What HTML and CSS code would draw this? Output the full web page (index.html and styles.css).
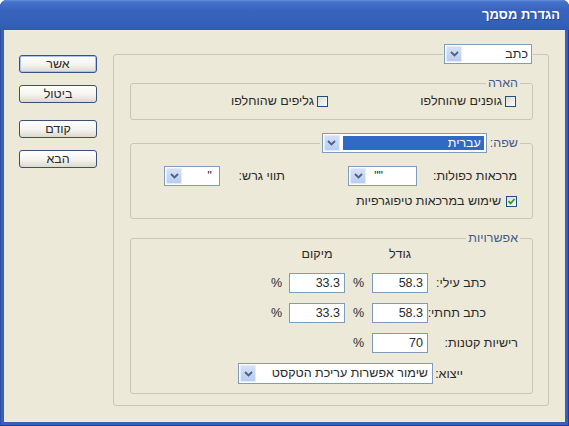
FILE: index.html
```html
<!DOCTYPE html>
<html lang="he" dir="rtl">
<head>
<meta charset="utf-8">
<title>הגדרת מסמך</title>
<link rel="stylesheet" href="styles.css">
</head>
<body>
<div class="window">
  <div class="titlebar"><span class="title">הגדרת מסמך</span></div>
  <div class="client">
    <fieldset class="main">
      <legend class="main-legend">
        <div class="combo combo-kind"><span class="val">כתב</span><span class="arrow"><svg width="9" height="6" viewBox="0 0 9 6"><path d="M1 1 L4.5 4.5 L8 1" fill="none" stroke="#4d6185" stroke-width="1.8"/></svg></span></div>
      </legend>

      <fieldset class="group g-highlight">
        <legend>הארה</legend>
        <div class="check-row">
          <div class="check item1"><span class="box"></span><span>גופנים שהוחלפו</span></div>
          <div class="check item2"><span class="box"></span><span>גליפים שהוחלפו</span></div>
        </div>
      </fieldset>

      <fieldset class="group g-lang">
        <legend class="lang-legend">
          <span class="legend-label">שפה:</span>
          <div class="combo combo-lang selected"><span class="val">עברית</span><span class="arrow"><svg width="9" height="6" viewBox="0 0 9 6"><path d="M1 1 L4.5 4.5 L8 1" fill="none" stroke="#4d6185" stroke-width="1.8"/></svg></span></div>
        </legend>
        <div class="quote-row">
          <span class="lbl-quotes">מרכאות כפולות:</span>
          <div class="combo combo-dq"><span class="val">""</span><span class="arrow"><svg width="9" height="6" viewBox="0 0 9 6"><path d="M1 1 L4.5 4.5 L8 1" fill="none" stroke="#4d6185" stroke-width="1.8"/></svg></span></div>
          <span class="lbl-apos">תווי גרש:</span>
          <div class="combo combo-sq"><span class="val">''</span><span class="arrow"><svg width="9" height="6" viewBox="0 0 9 6"><path d="M1 1 L4.5 4.5 L8 1" fill="none" stroke="#4d6185" stroke-width="1.8"/></svg></span></div>
        </div>
        <div class="check typo"><span class="box"><svg width="9" height="9" viewBox="0 0 9 9"><path d="M1.5 4.2 L3.6 6.4 L7.6 2" fill="none" stroke="#21a121" stroke-width="1.7"/></svg></span><span>שימוש במרכאות טיפוגרפיות</span></div>
      </fieldset>

      <fieldset class="group g-opts">
        <legend>אפשרויות</legend>
        <div class="opt-grid">
          <span></span><span class="head">גודל</span><span></span><span class="head">מיקום</span><span></span>
          <span class="lbl lbl-sup">כתב עילי:</span><span class="field">58.3</span><span class="pct">%</span><span class="field">33.3</span><span class="pct">%</span>
          <span class="lbl lbl-sub">כתב תחתי:</span><span class="field">58.3</span><span class="pct">%</span><span class="field">33.3</span><span class="pct">%</span>
          <span class="lbl lbl-caps">רישיות קטנות:</span><span class="field">70</span><span class="pct">%</span><span></span><span></span>
        </div>
        <div class="export-row">
          <span class="lbl-export">ייצוא:</span>
          <div class="combo combo-export"><span class="val">שימור אפשרות עריכת הטקסט</span><span class="arrow"><svg width="9" height="6" viewBox="0 0 9 6"><path d="M1 1 L4.5 4.5 L8 1" fill="none" stroke="#4d6185" stroke-width="1.8"/></svg></span></div>
        </div>
      </fieldset>
    </fieldset>

    <div class="buttons">
      <div class="btn default">אשר</div>
      <div class="btn b-cancel">ביטול</div>
      <div class="btn b-prev">קודם</div>
      <div class="btn b-next">הבא</div>
    </div>
  </div>
</div>
</body>
</html>
```
FILE: styles.css
```css
html, body {
  margin: 0;
  padding: 0;
  background: #ffffff;
}
body {
  font-family: "Liberation Sans", "DejaVu Sans", sans-serif;
  font-size: 12.5px;
  line-height: 14px;
  color: #2a2a2a;
}
.window {
  width: 569px;
  height: 426px;
  display: flex;
  flex-direction: column;
  background: #3561bb;
  border-radius: 7px 7px 0 0;
  overflow: hidden;
  box-shadow: inset 0 -1px 0 #1d3f96, inset 1px 0 0 #2a50a8, inset -1px 0 0 #1d3f96;
}
.titlebar {
  flex: none;
  height: 30px;
  display: flex;
  align-items: center;
  padding-right: 9px;
  background: linear-gradient(#6690de 0, #4472c9 2px, #3864bd 10px, #3561bb 22px, #305ab3 30px);
  color: #ffffff;
  font-weight: bold;
  font-size: 13px;
}
.title {
  text-shadow: 1px 1px 0 rgba(10, 30, 90, 0.45);
}
.client {
  flex: 1;
  margin: 0 4px 4px;
  background: #ece9d8;
  display: flex;
  gap: 16px;
  padding: 14px 16px 16px 15px;
  box-sizing: border-box;
}
.main {
  flex: none;
  width: 436px;
  box-sizing: border-box;
  margin: 0;
  padding: 12px 15px 0 16px;
  border: 1px solid #c9c6b4;
  border-radius: 3px;
  min-inline-size: 0;
}
.main-legend {
  padding: 0 1px;
}
.group {
  margin: 0;
  border: 1px solid #c9c6b4;
  border-radius: 3px;
  min-inline-size: 0;
  padding: 0 12px 0 10px;
}
.group > legend {
  padding: 0 2px;
  color: #46588c;
}
.g-highlight {
  padding-top: 4px;
  padding-bottom: 11px;
}
.g-lang {
  margin-top: 13px;
  padding-top: 13px;
  padding-bottom: 10px;
}
.g-opts {
  margin-top: 12px;
  padding-top: 2px;
  padding-bottom: 9px;
}

/* combo boxes */
.combo {
  display: flex;
  height: 20px;
  box-sizing: border-box;
  border: 1px solid #7f9db9;
  background: #ffffff;
  padding: 1px;
  color: #2a2a2a;
}
.combo .val {
  flex: 1;
  text-align: right;
  padding-right: 2px;
  line-height: 16px;
  white-space: nowrap;
  overflow: hidden;
}
.combo .arrow {
  flex: none;
  width: 16px;
  border-radius: 2px;
  background: linear-gradient(#d6e2f9, #b7caf0);
  box-shadow: inset 0 0 0 1px #e4ecfb;
  display: flex;
  align-items: center;
  justify-content: center;
}
.combo-kind {
  width: 88px;
}
.combo-lang {
  width: 165px;
}
.combo.selected .val {
  background: #316ac5;
  color: #ffffff;
  margin: 1px 1px 1px 3px;
  line-height: 14px;
  padding-right: 3px;
}
.lang-legend {
  display: flex;
  align-items: center;
  gap: 3px;
}
.legend-label {
  color: #46588c;
}

/* check boxes */
.check-row {
  display: flex;
  height: 14px;
  align-items: center;
}
.check {
  display: flex;
  align-items: center;
  gap: 3px;
  white-space: nowrap;
}
.item1 {
  width: 188px;
  margin-right: 4px;
}
.box {
  flex: none;
  width: 11px;
  height: 11px;
  box-sizing: border-box;
  border: 1px solid #1c5180;
  background: linear-gradient(135deg, #dcdcd5, #fbfbf8);
  display: flex;
  align-items: center;
  justify-content: center;
}
.typo {
  margin-top: 8px;
  margin-right: 3px;
  gap: 5px;
  height: 14px;
}

/* quotes row */
.quote-row {
  display: flex;
  align-items: center;
  height: 20px;
}
.lbl-quotes {
  width: 103px;
  box-sizing: border-box;
  padding-right: 3px;
  white-space: nowrap;
}
.combo-dq {
  width: 69px;
}
.combo-dq .val {
  padding-right: 32px;
}
.lbl-apos {
  width: 128px;
  box-sizing: border-box;
  padding-right: 63px;
  white-space: nowrap;
}
.combo-sq {
  width: 56px;
}
.combo-sq .val {
  padding-right: 6px;
}

/* options grid */
.opt-grid {
  display: grid;
  grid-template-columns: 92px 56px 27px 56px 25px;
  grid-template-rows: 16px 20px 20px 20px;
  row-gap: 10px;
  align-items: center;
}
.head {
  align-self: start;
  text-align: center;
}
.lbl {
  white-space: nowrap;
}
.lbl-sup, .lbl-sub {
  padding-right: 34px;
}
.lbl-caps {
  padding-right: 2px;
}
.field {
  height: 20px;
  box-sizing: border-box;
  border: 1px solid #7f9db9;
  background: #ffffff;
  text-align: right;
  padding-right: 4px;
  line-height: 18px;
}
.pct {
  text-align: center;
}
.export-row {
  display: flex;
  align-items: center;
  margin-top: 10px;
}
.lbl-export {
  width: 87px;
  box-sizing: border-box;
  padding-right: 57px;
  white-space: nowrap;
}
.combo-export {
  width: 195px;
  height: 21px;
}
.combo-export .val {
  line-height: 17px;
  padding-right: 3px;
}

/* buttons */
.buttons {
  flex: none;
  width: 78px;
  display: flex;
  flex-direction: column;
  padding-top: 11px;
}
.btn {
  height: 18px;
  box-sizing: border-box;
  border: 1px solid #3b5072;
  border-radius: 3px;
  background: linear-gradient(#ffffff, #f4f3ef 55%, #dcd8cc);
  display: flex;
  align-items: center;
  justify-content: center;
  font-size: 12.5px;
  color: #2a2a2a;
}
.btn.default {
  border-color: #34538e;
  box-shadow: inset 0 0 0 1px #a9c3f0;
}
.b-cancel {
  margin-top: 12px;
}
.b-prev {
  margin-top: 17px;
}
.b-next {
  margin-top: 12px;
}
```
